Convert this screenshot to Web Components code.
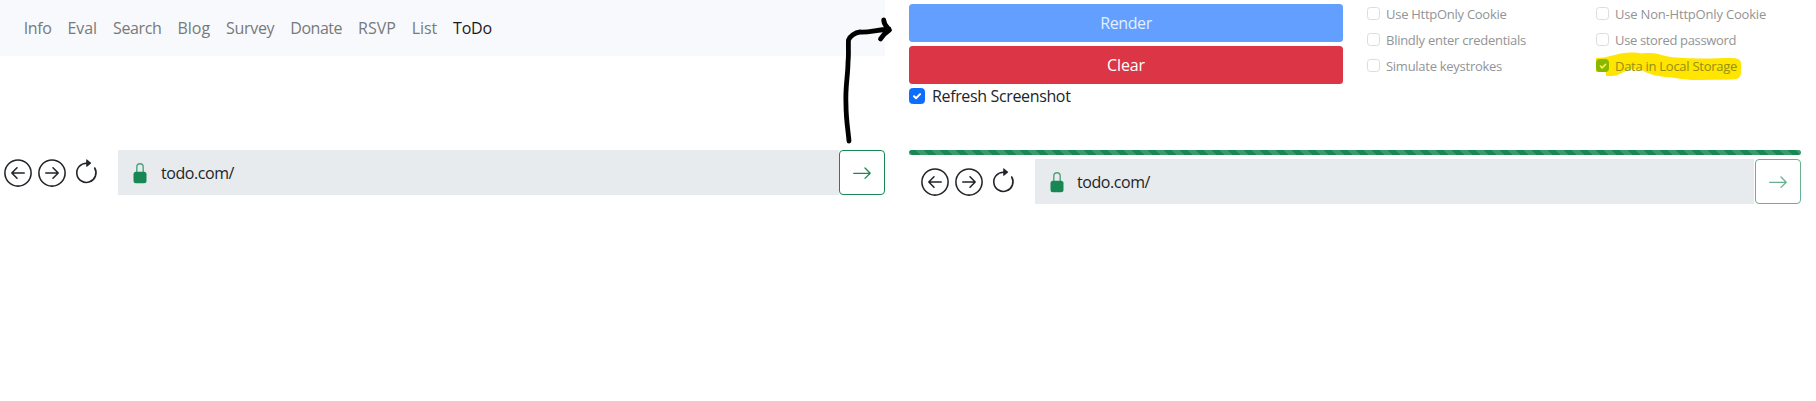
<!DOCTYPE html>
<html lang="en"><head><meta charset="utf-8"><title>ToDo</title>
<style>
body{margin:0;background:#fff;color:#212529;font:16px/24px "Open Sans","Noto Sans",sans-serif;overflow:hidden}
</style></head><body>
<app-page></app-page>
<script>
const define=(name,html,setup)=>customElements.define(name,class extends HTMLElement{
  constructor(){super();this.attachShadow({mode:'open'});const t=document.createElement('template');t.innerHTML=html;this.shadowRoot.append(t.content.cloneNode(true));}
  connectedCallback(){if(setup)setup(this,this.shadowRoot);}
});
// A label that tracks its letters to occupy the width given in its "w" attribute.
define('fit-text','<style>:host{display:inline-block;white-space:nowrap}span{display:inline-block}</style><span><slot></slot></span>',(el,root)=>{
  const w=+el.getAttribute('w'),s=root.querySelector('span');
  el.style.width=w+'px';
  s.style.letterSpacing=((w-s.getBoundingClientRect().width)/el.textContent.length)+'px';
});
define('nav-bar',`<style>:host{display:flex;height:56px;box-sizing:border-box;padding:16px 23.7px;gap:16px;background:#f8f9fc;color:#77797b}.on{color:#191b1c}</style>
<fit-text w="27.8">Info</fit-text><fit-text w="29.6">Eval</fit-text><fit-text w="48.4">Search</fit-text><fit-text w="32.6">Blog</fit-text><fit-text w="48.2">Survey</fit-text><fit-text w="51.8">Donate</fit-text><fit-text w="37.8">RSVP</fit-text><fit-text w="25.2">List</fit-text><fit-text class="on" w="38.8">ToDo</fit-text>`);
define('round-arrow',`<style>:host{display:block;width:28px;height:28px}:host([forward]) svg{transform:scaleX(-1)}svg{display:block}</style>
<svg width="28" height="28" viewBox="0 0 28 28" fill="none" stroke="#212529" stroke-width="1.55" stroke-linecap="round" stroke-linejoin="round"><circle cx="14" cy="14" r="13.1"/><path d="M20.2 14H7.8M13 8.8L7.8 14l5.2 5.2"/></svg>`);
define('reload-icon',`<style>:host{display:block;width:24px;height:26px}svg{display:block}</style>
<svg width="24" height="26" viewBox="0 0 24 26"><path d="M12.6 4.2A9.6 9.6 0 1 0 20.7 9" fill="none" stroke="#212529" stroke-width="1.6" stroke-linecap="round"/><path d="M12.2.8c0-.5.4-.7.8-.4l4 3.3c.3.2.3.5 0 .7l-4 3.3c-.4.3-.8.1-.8-.4z" fill="#212529"/></svg>`);
define('lock-icon',`<style>:host{display:block;width:14px;height:21px}svg{display:block}</style>
<svg width="14" height="21" viewBox="0 0 14 21"><path d="M3.8 9V4.2a3.200 3.400 0 0 1 6.400 0V9" fill="none" stroke="#4da379" stroke-width="1.400"/><rect x=".5" y="8.800" width="13" height="11.400" rx="2.500" fill="#198754"/></svg>`);
define('address-bar',`<style>
:host{display:flex;height:45px}.tools{display:flex;width:118px;box-sizing:border-box;padding:9px 0 0 4px;gap:6px}
:host([inset]) .tools{width:126px;padding-left:12px}
reload-icon{margin:0 0 0 2px}
:host([inset]) reload-icon{margin-left:1.500px}
.field{flex:1;display:flex;align-items:flex-start;background:#e8ebee;box-sizing:border-box;padding:12px 0 0 15px}
lock-icon{margin:1px 14px 0 0}
:host([inset]) lock-icon{margin-right:13px}
fit-text{margin-top:-1px}
button{width:46px;height:45px;box-sizing:border-box;border:1px solid #198754;border-radius:4px;background:#fff;padding:0;display:flex;align-items:center;justify-content:center}
:host([inset]) .field{margin-right:1px}:host([inset]) button{opacity:.65}
</style><div class="tools"><round-arrow></round-arrow><round-arrow forward></round-arrow><reload-icon></reload-icon></div>
<div class="field"><lock-icon></lock-icon><fit-text w="73">todo.com/</fit-text></div>
<button aria-label="Go"><svg width="20" height="14" viewBox="0 0 20 14" fill="none" stroke="#198754" stroke-width="1.3" stroke-linecap="round" stroke-linejoin="round"><path d="M1.7 7.3h16.5M13 2l5.2 5.3L13 12.4"/></svg></button>`);
define('check-option',`<style>
:host{display:flex;height:26px;gap:6px;font-size:13px;line-height:20px;color:#929496}
i{box-sizing:border-box;width:13px;height:13px;margin-top:3px;border:1px solid #dcddde;border-radius:3.3px;flex:none;display:flex;align-items:center;justify-content:center}
svg{display:none;flex:none;width:10px}
:host([checked]) i{background:#87b800;border-color:#87b800}:host([checked]) svg{display:block}
:host([checked]){color:#938f17;--tick:#fff04d}
:host([large]){height:24px;font-size:16px;line-height:24px;color:#212529;gap:7px;--tick:#fff}
:host([large]) i{width:16px;height:16px;margin-top:4px;border-color:#0d6efd;background:#0d6efd;border-radius:3.5px}
:host([large]) svg{width:12px}
</style><i><svg viewBox="0 0 12 12" fill="none" stroke="var(--tick)" stroke-width="2" stroke-linecap="round" stroke-linejoin="round"><path d="M3 6.2l2 2 4.1-4.100"/></svg></i><slot></slot>`);
define('action-button',`<style>:host{display:flex;height:38px;align-items:center;justify-content:center;border-radius:3.500px;background:var(--tone);color:var(--ink,#fff);margin-bottom:4px}</style><slot></slot>`);
define('option-grid',`<style>:host{display:grid;grid-template-columns:229px 205px;grid-template-rows:26px 26px 26px;padding:4px 0 0 24px;width:434px}
.marked{position:relative;z-index:0}.marker{position:absolute;z-index:-1;left:-1px;top:-7px}</style>
<check-option><fit-text w="120.5">Use HttpOnly Cookie</fit-text></check-option>
<check-option><fit-text w="151">Use Non-HttpOnly Cookie</fit-text></check-option>
<check-option><fit-text w="140">Blindly enter credentials</fit-text></check-option>
<check-option><fit-text w="121">Use stored password</fit-text></check-option>
<check-option><fit-text w="116">Simulate keystrokes</fit-text></check-option>
<div class="marked"><svg class="marker" width="150" height="34" viewBox="0 0 150 34"><path d="M1 9C12 9 16 6 29 4C38 3 41 3.5 46 4.5C50 4 57 3.5 63 5C75 9 86 9 97 9.3C111 10 126 9 136 9Q146 9 146 14V24Q146 30 138 30.5L101 31C88 31 82 28.5 70 28C60 27 56 25 50 23C47 20 42 20 36 20.5C27 22 25 27 17 27L11 27V23H1Z" fill="#ffe500"/></svg><check-option checked><fit-text w="122">Data in Local Storage</fit-text></check-option></div>`);
define('striped-bar',`<style>:host{display:block;height:5px;border-radius:3px;background:#198754 linear-gradient(45deg,rgba(255,255,255,.15) 25%,transparent 25%,transparent 50%,rgba(255,255,255,.15) 50%,rgba(255,255,255,.15) 75%,transparent 75%,transparent) 6px 0/16px 16px}</style>`);
define('app-page',`<style>
:host{display:grid;grid-template-columns:885px 892px;column-gap:24px;height:401px;position:relative}
.left address-bar{margin-top:94px}
.top{display:flex;height:150px}.actions{width:434px;padding-top:4px;display:flex;flex-direction:column}
.actions check-option{margin-top:-4px}
.right address-bar{margin-top:4px}
.stroke{position:absolute;left:835px;top:10px}
</style>
<section class="left"><nav-bar></nav-bar><address-bar></address-bar></section>
<section class="right"><div class="top"><div class="actions"><action-button style="--tone:#629ffe;--ink:#e5efff"><fit-text w="51.5">Render</fit-text></action-button><action-button style="--tone:#dc3545"><fit-text w="38">Clear</fit-text></action-button><check-option large checked><fit-text w="138.5">Refresh Screenshot</fit-text></check-option></div><option-grid></option-grid></div>
<striped-bar></striped-bar><address-bar inset></address-bar></section>
<svg class="stroke" width="65" height="140" viewBox="835 10 65 140" fill="none" stroke="#000" stroke-width="4.8" stroke-linecap="round" stroke-linejoin="round"><path d="M849 141C848 130 846 119 846 105C845 87 848 76 848 62C849 53 848 46 848.5 40C850 36 855 32.5 860 32C870 32.5 875 30 889 29M883.7 20C884 25 886 26 889.5 30C885 33 883 35 880.5 39"/></svg>`);
</script></body></html>
